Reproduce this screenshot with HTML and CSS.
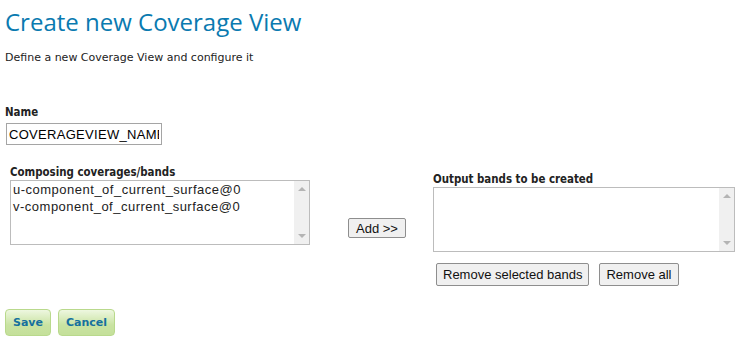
FILE: index.html
```html
<!DOCTYPE html>
<html lang="en">
<head>
    <meta charset="UTF-8">
    <title>Create new Coverage View</title>
    <link rel="stylesheet" href="styles.css">
</head>
<body>
    <h1>Create new Coverage View</h1>
    <p class="intro">Define a new Coverage View and configure it</p>

    <form class="view-form">
        <div class="field">
            <label for="name">Name</label>
            <input type="text" id="name" class="text-input" value="COVERAGEVIEW_NAME">
        </div>

        <div class="bands">
            <div class="band-col band-source">
                <label>Composing coverages/bands</label>
                <div class="listbox">
                    <ul class="list-items">
                        <li>u-component_of_current_surface@0</li>
                        <li>v-component_of_current_surface@0</li>
                    </ul>
                    <div class="scroll"><span class="arrow up"></span><span class="arrow down"></span></div>
                </div>
            </div>
            <div class="band-add">
                <button type="button" class="btn">Add &gt;&gt;</button>
            </div>
            <div class="band-col band-output">
                <label>Output bands to be created</label>
                <div class="listbox">
                    <ul class="list-items"></ul>
                    <div class="scroll"><span class="arrow up"></span><span class="arrow down"></span></div>
                </div>
                <div class="output-actions">
                    <button type="button" class="btn btn-tall">Remove selected bands</button>
                    <button type="button" class="btn btn-tall">Remove all</button>
                </div>
            </div>
        </div>

        <div class="form-actions">
            <button type="submit" class="btn-green">Save</button>
            <button type="button" class="btn-green">Cancel</button>
        </div>
    </form>
</body>
</html>
```

FILE: styles.css
```css
body {
    margin: 0;
    padding: 0 5px;
    background-color: #fff;
    color: #222;
    font-family: "DejaVu Sans", Verdana, sans-serif;
    font-size: 11px;
}
h1 {
    margin: 7px 0 0;
    font-family: "Open Sans", "DejaVu Sans", sans-serif;
    font-size: 24px;
    font-weight: normal;
    color: #0a7ab0;
    line-height: 30px;
}
.intro {
    margin: 14px 0 0;
    font-family: "DejaVu Sans", Verdana, sans-serif;
    font-size: 11px;
}
.view-form {
    margin-top: 41px;
}
.field label,
.band-col label {
    display: block;
    font-family: "DejaVu Sans Condensed", "DejaVu Sans", sans-serif;
    font-weight: bold;
    font-size: 11.4px;
    margin-bottom: 4px;
}
.band-col label {
    margin-bottom: 1px;
}
.text-input {
    box-sizing: border-box;
    width: 156px;
    height: 22px;
    margin-left: 1px;
    padding: 0 2px;
    border: 1px solid #a5a5a5;
    font-family: "Liberation Sans", Arial, sans-serif;
    font-size: 13px;
    letter-spacing: 0.3px;
    color: #000;
}
.bands {
    display: flex;
    margin-top: 20px;
}
.band-source {
    margin-left: 5px;
}
.band-output {
    margin-top: 7px;
}
.listbox {
    display: flex;
    box-sizing: border-box;
    width: 300px;
    height: 65px;
    border: 1px solid #bcbcbc;
}
.band-output .listbox {
    width: 302px;
}
.list-items {
    flex: 1;
    list-style: none;
    margin: 0;
    padding: 0 2px;
    font-family: "Liberation Sans", Arial, sans-serif;
    font-size: 13px;
    letter-spacing: 0.5px;
    color: #222;
    line-height: 17px;
}
.scroll {
    width: 15px;
    background-color: #f0f0f0;
    display: flex;
    flex-direction: column;
    justify-content: space-between;
    align-items: center;
    padding: 6px 0;
}
.arrow {
    width: 0;
    height: 0;
    border-left: 4px solid transparent;
    border-right: 4px solid transparent;
}
.arrow.up {
    border-bottom: 4px solid #b4b4b4;
}
.arrow.down {
    border-top: 4px solid #b4b4b4;
}
.band-add {
    width: 124px;
    box-sizing: border-box;
    display: flex;
    align-items: flex-start;
    padding: 53px 0 0 38px;
}
.btn {
    box-sizing: border-box;
    height: 20px;
    padding: 0 7px;
    background-color: #f0f0f0;
    border: 1px solid #8e8e8e;
    border-radius: 2px;
    font-family: "Liberation Sans", Arial, sans-serif;
    font-size: 13px;
    color: #111;
}
.btn-tall {
    height: 23px;
    padding: 0 6px;
}
.output-actions {
    display: flex;
    gap: 10px;
    margin-top: 11px;
    margin-left: 3px;
}
.form-actions {
    display: flex;
    gap: 7px;
    margin-top: 23px;
}
.btn-green {
    height: 27px;
    padding: 0 7px;
    background: linear-gradient(#eef7e0, #c9e3a2 60%, #c4e09a);
    border: 1px solid #b9d98c;
    border-radius: 4px;
    font-family: "DejaVu Sans", Verdana, sans-serif;
    font-weight: bold;
    font-size: 11px;
    color: #16709e;
}
```
